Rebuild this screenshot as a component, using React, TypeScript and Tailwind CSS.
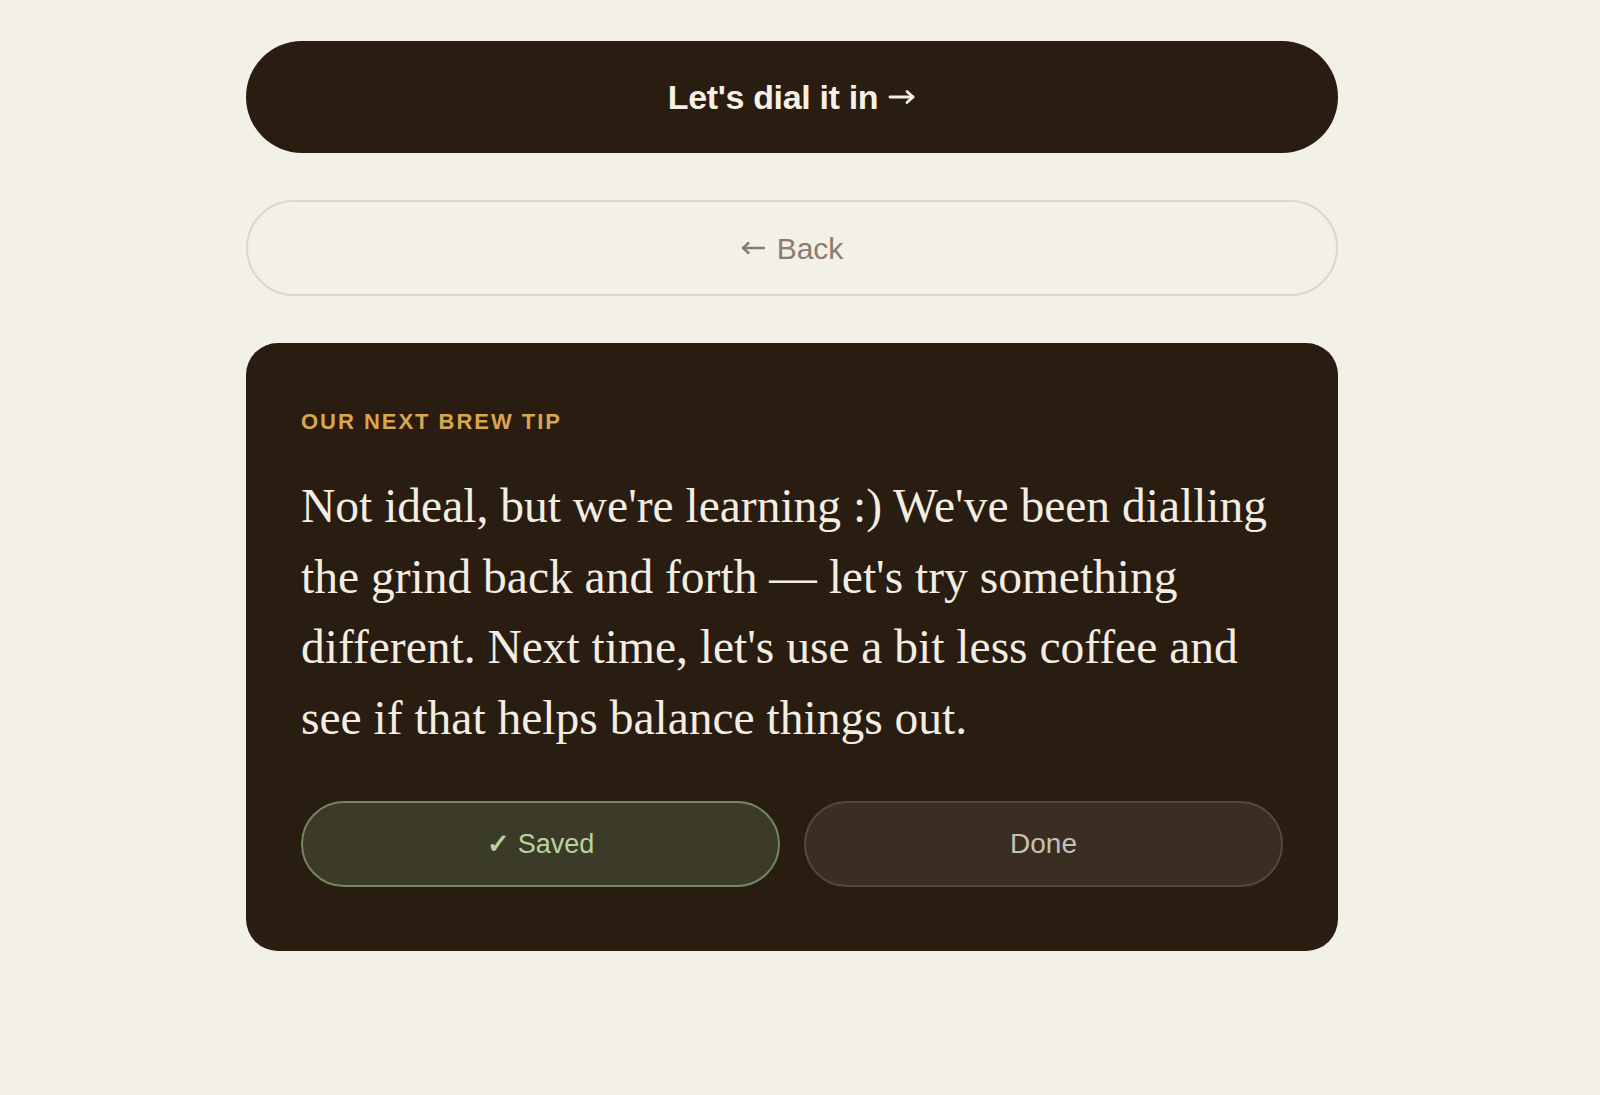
const sans = { fontFamily: '"Liberation Sans", Arial, sans-serif' };

function ArrowRightGlyph() {
  return (
    <svg width="28" height="16" viewBox="0 0 28 16" fill="none" stroke="currentColor" strokeWidth="2.8" strokeLinecap="round" strokeLinejoin="round">
      <path d="M2 8h23" />
      <path d="M19 2.5L25 8l-6 5.5" />
    </svg>
  );
}

function ArrowLeftGlyph() {
  return (
    <svg width="25" height="14" viewBox="0 0 25 14" fill="none" stroke="currentColor" strokeWidth="2.4" strokeLinecap="round" strokeLinejoin="round">
      <path d="M23 7H2" />
      <path d="M7.5 2L2 7l5.5 5" />
    </svg>
  );
}

export default function App() {
  return (
    <div className="min-h-[1095px] w-full bg-[#f3f0e8] pt-[41px]" style={sans}>
      <div className="ml-[246px] flex w-[1092px] flex-col gap-[47px]">
        <button className="flex h-[112px] w-full items-center justify-center gap-[10px] rounded-full bg-[#291c11] text-[34px] font-semibold tracking-[-0.01em] text-[#f6f0e6]">
          <span>Let's dial it in</span>
          <ArrowRightGlyph />
        </button>

        <button className="flex h-[96px] w-full items-center justify-center gap-[11px] rounded-full border-2 border-[#dcd6cd] text-[30px] text-[#8a7d6d]">
          <ArrowLeftGlyph />
          <span>Back</span>
        </button>

        <div className="flex flex-col rounded-[32px] bg-[#291c11] px-[55px] pt-[66px] pb-[64px]">
          <div className="text-[22px] font-bold leading-[26px] tracking-[0.09em] text-[#d9a64e]">
            OUR NEXT BREW TIP
          </div>

          <p
            className="mt-[36px] text-[47.5px] leading-[70.5px] text-[#f3ede2]"
            style={{ fontFamily: '"Liberation Serif", "Times New Roman", serif' }}
          >
            Not ideal, but we're learning :) We've been dialling the grind back and forth — let's try something
            different. Next time, let's use a bit less coffee and see if that helps balance things out.
          </p>

          <div className="mt-[48px] grid grid-cols-2 gap-6">
            <button className="flex h-[86px] items-center justify-center gap-2 rounded-full border-2 border-[#71885d] bg-[#3c3a29] text-[27px] font-medium text-[#b9d49b]">
              <span className="font-bold">✓</span> Saved
            </button>
            <button className="flex h-[86px] items-center justify-center rounded-full border-2 border-[#55493d] bg-[#3a2d21] text-[28px] font-medium text-[#c8c0b6]">
              Done
            </button>
          </div>
        </div>
      </div>
    </div>
  );
}
